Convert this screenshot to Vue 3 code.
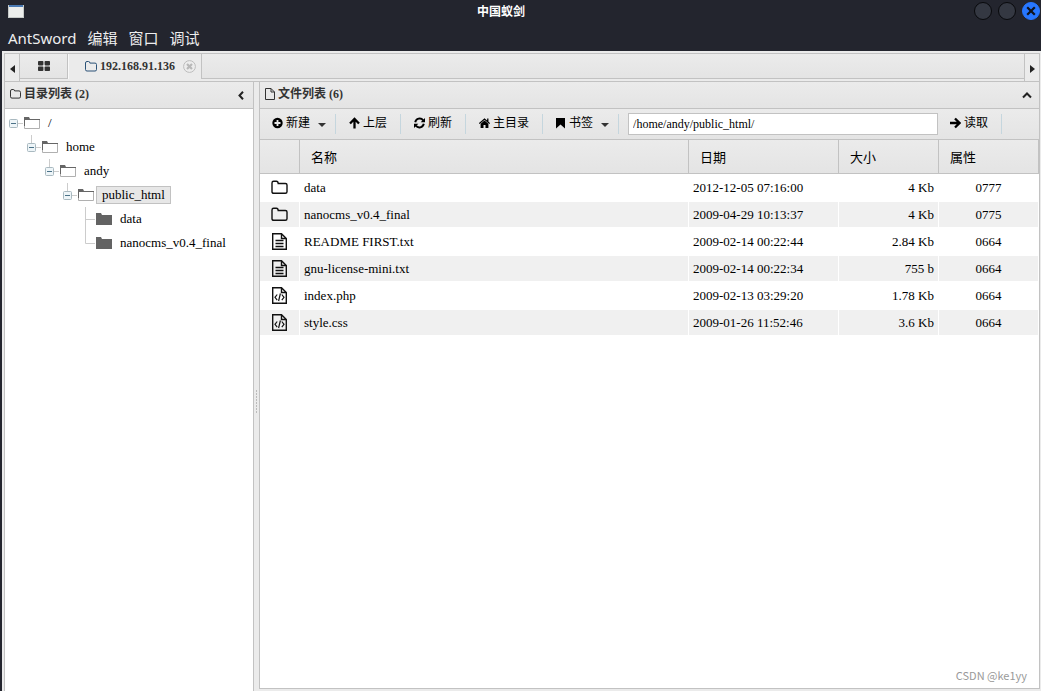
<script setup>
import { ref } from 'vue'

const menus = ['AntSword', '编辑', '窗口', '调试']
const path = ref('/home/andy/public_html/')

const tools = [
  { icon: 'plus', label: '新建', menu: true },
  { icon: 'up', label: '上层' },
  { icon: 'refresh', label: '刷新' },
  { icon: 'home', label: '主目录' },
  { icon: 'bookmark', label: '书签', menu: true },
]

const tree = [
  { name: '/', depth: 0, open: true },
  { name: 'home', depth: 1, open: true },
  { name: 'andy', depth: 2, open: true },
  { name: 'public_html', depth: 3, open: true, selected: true },
  { name: 'data', depth: 4 },
  { name: 'nanocms_v0.4_final', depth: 4, last: true },
]

const files = [
  { type: 'dir', name: 'data', date: '2012-12-05 07:16:00', size: '4 Kb', attr: '0777' },
  { type: 'dir', name: 'nanocms_v0.4_final', date: '2009-04-29 10:13:37', size: '4 Kb', attr: '0775' },
  { type: 'text', name: 'README FIRST.txt', date: '2009-02-14 00:22:44', size: '2.84 Kb', attr: '0664' },
  { type: 'text', name: 'gnu-license-mini.txt', date: '2009-02-14 00:22:34', size: '755 b', attr: '0664' },
  { type: 'code', name: 'index.php', date: '2009-02-13 03:29:20', size: '1.78 Kb', attr: '0664' },
  { type: 'code', name: 'style.css', date: '2009-01-26 11:52:46', size: '3.6 Kb', attr: '0664' },
]
</script>

<template>
  <div class="window">
    <header class="titlebar">
      <svg class="app-icon" width="16" height="13" viewBox="0 0 16 13">
        <rect x="0.5" y="0.5" width="15" height="12" fill="#eceeec" stroke="#c6cac8" />
        <rect x="1" y="0" width="14" height="2" fill="#4a7ab4" />
      </svg>
      <h1 class="title">中国蚁剑</h1>
      <div class="controls">
        <button class="dot" aria-label="最小化"></button>
        <button class="dot" aria-label="最大化"></button>
        <button class="dot close" aria-label="关闭">
          <svg width="10" height="10" viewBox="0 0 10 10"><path d="M1.2 1.2l7.6 7.6M8.8 1.2L1.2 8.8" stroke="#10131c" stroke-width="2.2" /></svg>
        </button>
      </div>
    </header>
    <nav class="menubar">
      <button v-for="m in menus" :key="m">{{ m }}</button>
    </nav>

    <div class="workspace">
      <div class="tabbar">
        <button class="scroll" aria-label="向左"><svg width="5" height="8" viewBox="0 0 5 8"><path d="M5 0v8L0 4z" fill="#222" /></svg></button>
        <div class="tabs">
          <button class="tab grid" aria-label="主页">
            <svg width="12" height="10" viewBox="0 0 12 10" fill="#333"><rect width="5.4" height="4.4" rx="0.8" /><rect x="6.6" width="5.4" height="4.4" rx="0.8" /><rect y="5.6" width="5.4" height="4.4" rx="0.8" /><rect x="6.6" y="5.6" width="5.4" height="4.4" rx="0.8" /></svg>
          </button>
          <div class="tab active">
            <button class="tab-name">
              <svg width="12" height="11" viewBox="0 0 12 11"><path d="M.5 8.700V2q0-1.500 1.500-1.500h1.500q1.400 0 1.400 1.600H10q1.500 0 1.500 1.400v5.200q0 1.300-1.500 1.300H2Q.5 10 .5 8.700z" fill="none" stroke="#2c5378" /></svg>
              192.168.91.136
            </button>
            <button class="tab-close" aria-label="关闭标签">
              <svg width="13" height="13" viewBox="0 0 13 13"><circle cx="6.500" cy="6.500" r="5.900" fill="#ececec" stroke="#bcbcbc" /><path d="M4 4l5 5M9 4L4 9" stroke="#b8b8b8" stroke-width="2.200" /></svg>
            </button>
          </div>
          <div class="tab-rest"></div>
        </div>
        <button class="scroll right" aria-label="向右"><svg width="5" height="8" viewBox="0 0 5 8"><path d="M0 0v8l5-4z" fill="#222" /></svg></button>
      </div>

      <div class="panes">
        <aside class="pane side">
          <div class="pane-head">
            <svg width="11" height="10" viewBox="0 0 11 10"><path d="M.5 7.800V2q0-1.500 1.500-1.500h1.200q1.400 0 1.400 1.400H9q1.500 0 1.500 1.400v4.500q0 1.300-1.500 1.300H2Q.5 9.100.5 7.800z" fill="none" stroke="#333" /></svg>
            <h2>目录列表 (2)</h2>
            <button class="fold" aria-label="折叠目录"><svg width="6" height="9" viewBox="0 0 6 9"><path d="M5 .8L1.500 4.500 5 8.200" fill="none" stroke="#222" stroke-width="2" /></svg></button>
          </div>
          <ul class="tree">
            <li v-for="(n, i) in tree" :key="i" :style="{ paddingLeft: n.depth * 18 + 'px' }">
              <svg class="branch" width="18" height="24" viewBox="0 0 18 24">
                <template v-if="n.open">
                  <path v-if="n.depth" d="M8.500 0v8" stroke="#ccc" />
                  <path d="M13 12.500h5" stroke="#ccc" />
                  <rect x="4.500" y="8.500" width="8" height="8" rx="1" fill="#eef5f8" stroke="#a9b9c0" />
                  <path d="M6 12.500h5" stroke="#4b7288" />
                </template>
                <path v-else :d="n.last ? 'M8.500 0v12.500H18' : 'M8.500 0v24M8.500 12.500H18'" fill="none" stroke="#ccc" />
              </svg>
              <svg class="folder" width="16" height="12" viewBox="0 0 16 12">
                <template v-if="n.open">
                  <path d="M.5 11.500V2.500h15v9z" fill="#fff" stroke="#b0b0b0" />
                  <path d="M0 0h5l1 2h10v1H1v6H0z" fill="#666" />
                </template>
                <path v-else d="M0 0h5l1 2h10v10H0z" fill="#636363" />
              </svg>
              <button :class="['node', { selected: n.selected }]">{{ n.name }}</button>
            </li>
          </ul>
        </aside>

        <div class="splitter"><span class="grip"></span></div>

        <main class="pane main">
          <div class="pane-head">
            <svg width="10" height="12" viewBox="0 0 10 12"><path d="M.5.5h5.500l3.500 3.500v7.500h-9zM6 .5V4h3.500" fill="none" stroke="#333" /></svg>
            <h2>文件列表 (6)</h2>
            <button class="fold" aria-label="折叠文件"><svg width="10" height="7" viewBox="0 0 10 7"><path d="M1 5.500L5 1.500l4 4" fill="none" stroke="#222" stroke-width="2" /></svg></button>
          </div>

          <div class="toolbar">
            <button v-for="t in tools" :key="t.label" class="tool">
              <svg class="ticon" width="11" height="12" viewBox="0 0 11 12">
                <template v-if="t.icon === 'plus'">
                  <circle cx="5.500" cy="6" r="5.200" /><path d="M5.500 3v6M2.500 6h6" stroke="#e8e8e8" stroke-width="1.800" />
                </template>
                <path v-else-if="t.icon === 'up'" d="M5.500 2.200V11.500M1 6.500l4.500-4.500L10 6.500" fill="none" stroke="#000" stroke-width="2.300" />
                <template v-else-if="t.icon === 'refresh'">
                  <path d="M1.200 5.200C2 1.300 6.800.3 9.200 3.300M9.800 6.800C9 10.700 4.200 11.700 1.800 8.700" fill="none" stroke="#000" stroke-width="1.900" />
                  <path d="M11 1v4.300H6.700zM0 11V6.700h4.300z" />
                </template>
                <template v-else-if="t.icon === 'home'">
                  <path d="M5.500 3.400L9.400 6.800V11H6.500V8h-2v3H1.600V6.800z" /><path d="M.3 6.500L5.500 2l5.200 4.500M8.800 1.500v3" fill="none" stroke="#000" stroke-width="1.300" />
                </template>
                <path v-else d="M1 1h9v10.500L5.500 7.500 1 11.500z" />
              </svg>
              <span>{{ t.label }}</span>
              <svg v-if="t.menu" class="caret" width="8" height="4" viewBox="0 0 8 4"><path d="M0 0h8L4 4z" fill="#333" /></svg>
            </button>
            <input v-model="path" type="text" aria-label="路径" />
            <button class="tool read">
              <svg class="ticon" width="11" height="12" viewBox="0 0 11 12"><path d="M0 6h9.200M5 1.500L9.500 6 5 10.500" fill="none" stroke="#000" stroke-width="2.300" /></svg>
              <span>读取</span>
            </button>
          </div>

          <table>
            <colgroup><col class="c-icon" /><col /><col class="c-date" /><col class="c-num" /><col class="c-num" /></colgroup>
            <thead>
              <tr><th></th><th>名称</th><th>日期</th><th>大小</th><th>属性</th></tr>
            </thead>
            <tbody>
              <tr v-for="f in files" :key="f.name">
                <td class="icon">
                  <svg v-if="f.type === 'dir'" width="17" height="17" viewBox="0 0 17 17"><path d="M1 12.800V4q0-1.700 1.700-1.700h2.800Q7 2.300 7.200 4.500h7.200Q16 4.500 16 6v6.800q0 1.500-1.600 1.500H2.700Q1 14.300 1 12.800z" fill="none" stroke="#111" stroke-width="1.400" /></svg>
                  <svg v-else width="17" height="17" viewBox="0 0 17 17" fill="none" stroke="#111" stroke-width="1.400">
                    <path d="M1.700.7h8.800l4.800 4.800v10.800H1.700zM10.500.7v4.800h4.800" />
                    <path v-if="f.type === 'text'" d="M4.500 7.500h8M4.500 10.500h8M4.500 13.500h8" />
                    <path v-else d="M6.200 7.500L4 10.300l2.200 2.800M10.800 7.500l2.200 2.800-2.200 2.800M9.400 6.500l-1.800 7.500" stroke-width="1.200" />
                  </svg>
                </td>
                <td>{{ f.name }}</td>
                <td>{{ f.date }}</td>
                <td class="size">{{ f.size }}</td>
                <td class="attr">{{ f.attr }}</td>
              </tr>
            </tbody>
          </table>
          <span class="mark">CSDN @ke1yy</span>
        </main>
      </div>
    </div>
  </div>
</template>

<style>
body { margin: 0; }
</style>

<style scoped>
* { box-sizing: border-box; }
button { border: 0; padding: 0; margin: 0; background: none; font: inherit; color: inherit; }
svg { display: block; flex: none; }
.window {
  min-height: 100vh;
  display: flex;
  flex-direction: column;
  background: #23252e;
  font-family: "Liberation Serif", "Noto Sans CJK SC", serif;
  font-size: 13px;
  color: #000;
}
.titlebar {
  display: grid;
  grid-template-columns: 1fr auto 1fr;
  align-items: center;
  height: 22px;
  padding: 0 1px 0 8px;
}
.title { margin: 0 46px 0 0; font: bold 12px/20px "Noto Sans CJK SC", sans-serif; color: #fff; }
.controls { display: flex; justify-content: flex-end; gap: 6px; }
.dot {
  display: flex;
  align-items: center;
  justify-content: center;
  width: 18px;
  height: 18px;
  border: 1px solid #08090c;
  border-radius: 50%;
  background: #343842;
}
.dot.close { background: #2777ff; border-color: #2777ff; }
.menubar {
  display: flex;
  gap: 11px;
  height: 29px;
  padding: 0 8px;
  font: 15px/32px "Noto Sans", "Noto Sans CJK SC", sans-serif;
  color: #eee;
}
.workspace {
  flex: 1;
  display: flex;
  flex-direction: column;
  margin-left: 2px;
  padding: 2px 1px 0 2px;
  background: #ebebeb;
}
.tabbar {
  display: flex;
  height: 29px;
  border: 1px solid #c2c2c2;
}
.scroll {
  display: flex;
  align-items: center;
  justify-content: center;
  width: 15px;
  padding-top: 2px;
  border-right: 1px solid #c2c2c2;
}
.scroll.right { border-right: 0; border-left: 1px solid #c2c2c2; }
.tabs { flex: 1; display: flex; height: 25px; }
.tab {
  display: flex;
  align-items: center;
  border-right: 1px solid #c2c2c2;
  background: linear-gradient(#ebebeb, #e4e4e4);
}
.grid { justify-content: center; width: 48px; border-bottom: 1px solid #c2c2c2; }
.tab.active { gap: 8px; width: 134px; padding-left: 16px; background: #ebebeb; border-left: 1px solid #f8f8f8; }
.tab-name { display: flex; align-items: center; gap: 3px; font-size: 12px; font-weight: bold; color: #333; }
.tab-rest { flex: 1; border-bottom: 1px solid #c2c2c2; background: linear-gradient(#ebebeb, #e4e4e4); }
.panes { flex: 1; display: flex; }
.pane { display: flex; flex-direction: column; background: #fff; border: solid #c2c2c2; border-width: 0 1px; }
.side { width: 250px; }
.main { position: relative; flex: 1; min-width: 0; border-bottom-width: 1px; margin-bottom: 2px; }
.pane-head {
  display: flex;
  align-items: center;
  gap: 3px;
  height: 27px;
  padding: 0 7px 3px 5px;
  border-bottom: 1px solid #c2c2c2;
  background: linear-gradient(#ebebeb, #e4e4e4);
}
.side .pane-head { padding-right: 9px; }
h2 { flex: 1; margin: 0; font-size: 12px; line-height: 16px; color: #333; }
.fold { padding-top: 4px; }
.splitter { display: flex; align-items: center; justify-content: center; width: 5px; padding-top: 30px; }
.grip { width: 1px; height: 23px; background: repeating-linear-gradient(#bbb 0 2px, #ebebeb 2px 3px); }
.tree { list-style: none; margin: 0; padding: 2px 0; }
.tree li { display: flex; align-items: center; height: 24px; }
.folder { margin: 0 2px 0 1px; }
.node { height: 18px; padding: 0 5px; border: 1px solid transparent; line-height: 16px; white-space: nowrap; }
.node.selected { background: #e7e7e7; border-color: #c2c2c2; }
.toolbar {
  display: flex;
  align-items: center;
  height: 31px;
  border-bottom: 1px solid #c2c2c2;
  background: linear-gradient(#ebebeb, #e4e4e4);
  font-size: 12px;
}
.tool {
  display: flex;
  align-items: center;
  gap: 3px;
  height: 20px;
  padding: 0 13px 2px;
  border-right: 1px solid #c5d6de;
  line-height: 18px;
  white-space: nowrap;
}
.tool:has(.caret) { padding-left: 12px; padding-right: 9px; }
.caret { margin: 4px 0 0 5px; }
.tool.read { padding-left: 12px; }
input {
  width: 310px;
  height: 22px;
  margin-left: 9px;
  padding: 0 4px;
  border: 1px solid #c2c2c2;
  background: #fff;
  font: 12px "Liberation Serif", serif;
  color: #000;
}
table { width: 100%; table-layout: fixed; border-spacing: 0; }
.c-icon { width: 40px; }
.c-date { width: 150px; }
.c-num { width: 100px; }
th {
  height: 34px;
  padding: 0 11px;
  border: solid #c2c2c2;
  border-width: 0 1px 1px 0;
  background: linear-gradient(#ebebeb, #e4e4e4);
  font-weight: normal;
  text-align: left;
}
td {
  height: 27px;
  padding: 0 4px;
  border: 1px solid #fff;
  border-left: 0;
  white-space: nowrap;
}
tbody tr:nth-child(even) td { background: #f0f0f0; }
.icon { padding: 0 11px; }
.size { text-align: right; }
.attr { text-align: center; }
.mark {
  position: absolute;
  right: 12px;
  bottom: 4px;
  font: 11px/18px "Noto Sans CJK SC", sans-serif;
  color: #999;
}
</style>
